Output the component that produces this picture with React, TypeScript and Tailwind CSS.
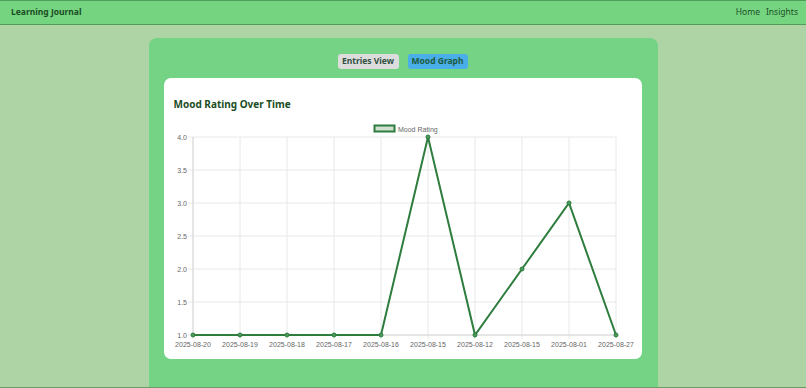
import React from "react";

const dates = [
  "2025-08-20",
  "2025-08-19",
  "2025-08-18",
  "2025-08-17",
  "2025-08-16",
  "2025-08-15",
  "2025-08-12",
  "2025-08-15",
  "2025-08-01",
  "2025-08-27",
];
const moods = [1, 1, 1, 1, 1, 4, 1, 2, 3, 1];

// plot box inside the svg
const left = 23;
const right = 446;
const top = 17;
const bottom = 215;

function MoodChart() {
  const stepX = (right - left) / (dates.length - 1);
  const yFor = (v: number) => bottom - ((v - 1) / 3) * (bottom - top);
  const ticks = [4, 3.5, 3, 2.5, 2, 1.5, 1];
  const pts = moods.map((m, i) => [left + i * stepX, yFor(m)]);

  return (
    <svg width="470" height="232" className="block overflow-visible" style={{ fontFamily: "'Liberation Sans', Arial, sans-serif" }}>
      {/* legend */}
      <rect x="204.5" y="5.5" width="20" height="6" fill="#cfe0d0" stroke="#2e7d3e" strokeWidth="2" />
      <text x="228" y="11.5" fontSize="7" fill="#666666">
        Mood Rating
      </text>

      {ticks.map((t) => (
        <g key={t}>
          <line x1={left - 5} x2={right} y1={yFor(t)} y2={yFor(t)} stroke="#e8e8e8" strokeWidth="1" />
          <text x={left - 6} y={yFor(t) + 2.5} fontSize="7" fill="#666666" textAnchor="end">
            {t.toFixed(1)}
          </text>
        </g>
      ))}
      {dates.map((d, i) => (
        <g key={i}>
          <line x1={left + i * stepX} x2={left + i * stepX} y1={top} y2={bottom + 4} stroke="#e8e8e8" strokeWidth="1" />
          <text x={left + i * stepX} y={bottom + 12} fontSize="7" fill="#666666" textAnchor="middle">
            {d}
          </text>
        </g>
      ))}
      <line x1={left} x2={left} y1={top} y2={bottom} stroke="#d8d8d8" />
      <line x1={left} x2={right} y1={bottom} y2={bottom} stroke="#d8d8d8" />

      <polyline
        points={pts.map((p) => p.join(",")).join(" ")}
        fill="none"
        stroke="#2e7d3e"
        strokeWidth="2"
      />
      {pts.map((p, i) => (
        <circle key={i} cx={p[0]} cy={p[1]} r="2" fill="#4b9a5a" stroke="#2e7d3e" strokeWidth="1" />
      ))}
    </svg>
  );
}

export default function App() {
  return (
    <div
      className="h-[388px] flex flex-col bg-[#aed3a5] overflow-hidden"
      style={{ fontFamily: "'Noto Sans', 'Open Sans', sans-serif" }}
    >
      <nav className="h-[25px] shrink-0 flex items-center justify-between pl-[11px] pr-[8px] bg-[#74d47f] border-t border-b border-[#4f9d59]">
        <span className="text-[8.5px] font-bold text-[#1b4d25]">Learning Journal</span>
        <div className="flex gap-[6px] text-[8.5px] text-[#1f4f2a]">
          <span>Home</span>
          <span>Insights</span>
        </div>
      </nav>

      <main className="flex-1 overflow-hidden pt-[13px]">
        <div className="mx-auto w-[509px] h-[400px] rounded-[8px] bg-[#74d384] pt-[16px] pl-[15px] pr-[16px]">
          <div className="flex justify-center gap-[9px]">
            <button className="w-[61px] h-[15px] rounded-[3px] bg-[#dcdcdc] text-[8.5px] font-bold text-[#2f4f3f]">
              Entries View
            </button>
            <button className="w-[60px] h-[15px] rounded-[3px] bg-[#4aaee8] text-[8.5px] font-bold text-[#1d5a3c]">
              Mood Graph
            </button>
          </div>

          <div className="mt-[9px] h-[281px] rounded-[7px] bg-white pt-[19px] pl-[10px]">
            <h2 className="text-[10px] font-bold text-[#1b4d25] leading-[14px]">Mood Rating Over Time</h2>
            <div className="mt-[9px] -ml-[4px]">
              <MoodChart />
            </div>
          </div>
        </div>
      </main>
      <div className="h-px shrink-0 bg-[#6f9a6a]" />
    </div>
  );
}
